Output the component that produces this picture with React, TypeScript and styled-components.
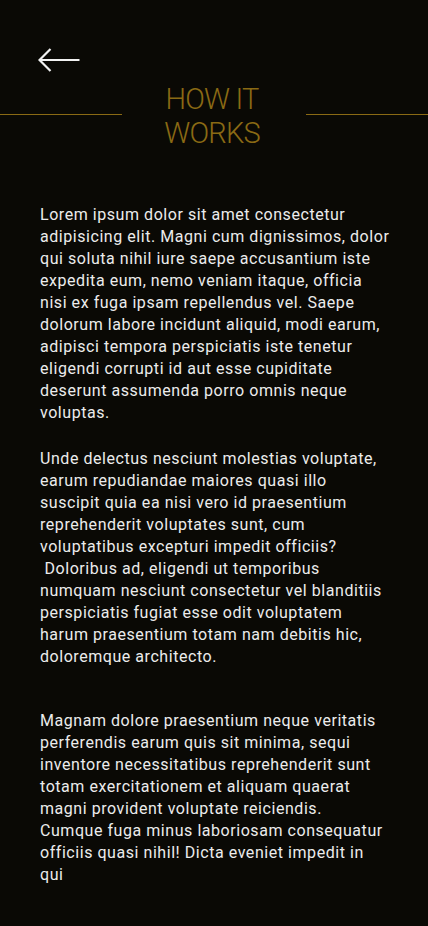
import React from "react";
import styled, { createGlobalStyle } from "styled-components";

const Global = createGlobalStyle`
  html, body { margin: 0; padding: 0; background: #0a0905; }
  body { font-family: Roboto, "Noto Sans", sans-serif; }
`;

const Page = styled.div`
  width: 428px;
  min-height: 926px;
  background: #0a0905;
  color: #ececec;
  display: flex;
  flex-direction: column;
`;

const TopBar = styled.div`
  display: flex;
  align-items: center;
  padding: 47px 0 0 38px;
  height: 26px;
`;

const BackButton = styled.button`
  background: none;
  border: none;
  padding: 0;
  display: flex;
  cursor: pointer;
`;

const TitleRow = styled.div`
  display: grid;
  grid-template-columns: 1fr 184px 1fr;
  align-items: center;
  margin-top: 9px;
`;

const Rule = styled.div`
  height: 1px;
  background: #8a6a14;
  margin-bottom: 4px;
`;

const Title = styled.h1`
  margin: 0;
  font-weight: 300;
  font-size: 29px;
  line-height: 34px;
  color: #8a6a14;
  text-align: center;
  padding: 0 44px 0 40px;
  letter-spacing: -0.8px;
`;

const Body = styled.div`
  padding: 54px 20px 40px 40px;
  font-size: 16px;
  line-height: 22px;
  font-weight: 400;
  letter-spacing: 0.55px;
  color: #ececec;
`;

const Para = styled.p<{ $gap?: number }>`
  margin: 0 0 ${(p) => p.$gap ?? 24}px 0;
`;

const Line = styled.span`
  display: block;
  white-space: pre;
`;

const p1 = [
  "Lorem ipsum dolor sit amet consectetur",
  "adipisicing elit. Magni cum dignissimos, dolor",
  "qui soluta nihil iure saepe accusantium iste",
  "expedita eum, nemo veniam itaque, officia",
  "nisi ex fuga ipsam repellendus vel. Saepe",
  "dolorum labore incidunt aliquid, modi earum,",
  "adipisci tempora perspiciatis iste tenetur",
  "eligendi corrupti id aut esse cupiditate",
  "deserunt assumenda porro omnis neque",
  "voluptas.",
];

const p2 = [
  "Unde delectus nesciunt molestias voluptate,",
  "earum repudiandae maiores quasi illo",
  "suscipit quia ea nisi vero id praesentium",
  "reprehenderit voluptates sunt, cum",
  "voluptatibus excepturi impedit officiis?",
  " Doloribus ad, eligendi ut temporibus",
  "numquam nesciunt consectetur vel blanditiis",
  "perspiciatis fugiat esse odit voluptatem",
  "harum praesentium totam nam debitis hic,",
  "doloremque architecto.",
];

const p3 = [
  "Magnam dolore praesentium neque veritatis",
  "perferendis earum quis sit minima, sequi",
  "inventore necessitatibus reprehenderit sunt",
  "totam exercitationem et aliquam quaerat",
  "magni provident voluptate reiciendis.",
  "Cumque fuga minus laboriosam consequatur",
  "officiis quasi nihil! Dicta eveniet impedit in",
  "qui",
];

export default function App() {
  return (
    <Page>
      <Global />
      <TopBar>
        <BackButton aria-label="Back">
          <svg width="42" height="26" viewBox="0 0 42 26" fill="none">
            <path d="M1.5 13H41.5" stroke="#f2f2f2" strokeWidth="2.2" />
            <path d="M12.5 2L1.5 13L12.5 24" stroke="#f2f2f2" strokeWidth="2.2" />
          </svg>
        </BackButton>
      </TopBar>
      <TitleRow>
        <Rule />
        <Title>HOW IT WORKS</Title>
        <Rule />
      </TitleRow>
      <Body>
        <Para>
          {p1.map((l, i) => (
            <Line key={i}>{l}</Line>
          ))}
        </Para>
        <Para $gap={42}>
          {p2.map((l, i) => (
            <Line key={i}>{l}</Line>
          ))}
        </Para>
        <Para $gap={0}>
          {p3.map((l, i) => (
            <Line key={i}>{l}</Line>
          ))}
        </Para>
      </Body>
    </Page>
  );
}
